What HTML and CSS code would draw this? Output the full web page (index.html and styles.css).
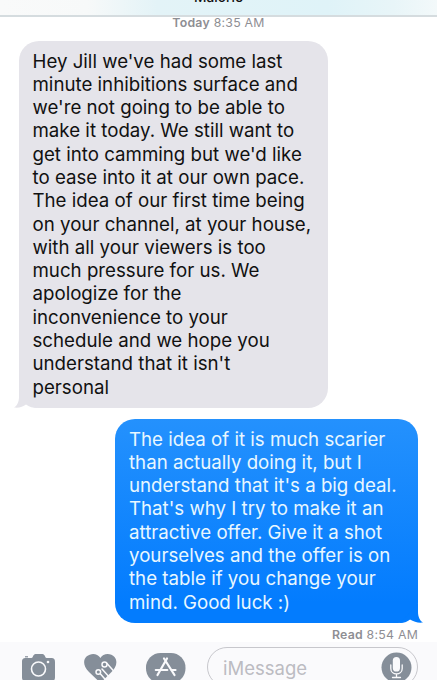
FILE: index.html
```html
<!DOCTYPE html>
<html lang="en">
<head>
  <meta charset="UTF-8" />
  <meta name="viewport" content="width=device-width, initial-scale=1.0"/>
  <title>Messages</title>
  <link rel="stylesheet" href="styles.css">
</head>
<body>
  <div class="phone">
    <!-- Contact header -->
    <header class="header"><span class="contact">Malorie</span></header>

    <!-- Conversation -->
    <main class="chat">
      <div class="timestamp"><b>Today</b> 8:35 AM</div>

      <div class="bubble received">
        Hey Jill we've had some last<br>
        minute inhibitions surface and<br>
        we're not going to be able to<br>
        make it today. We still want to<br>
        get into camming but we'd like<br>
        to ease into it at our own pace.<br>
        The idea of our first time being<br>
        on your channel, at your house,<br>
        with all your viewers is too<br>
        much pressure for us. We<br>
        apologize for the<br>
        inconvenience to your<br>
        schedule and we hope you<br>
        understand that it isn't<br>
        personal
        <svg class="tail" width="24" height="20" viewBox="0 0 24 20"><path d="M5 0V9C5 14 3 18 0 19.500C5 20 9 19 12 16.500C15 19 19 20 24 20L16 13Z" fill="#e5e4ea"/></svg>
      </div>

      <div class="bubble sent">
        The idea of it is much scarier<br>
        than actually doing it, but I<br>
        understand that it's a big deal.<br>
        That's why I try to make it an<br>
        attractive offer. Give it a shot<br>
        yourselves and the offer is on<br>
        the table if you change your<br>
        mind. Good luck :)
        <svg class="tail" width="24" height="20" viewBox="0 0 24 20"><path d="M19 0V9C19 14 21 18 24 19.500C19 20 15 19 11 16.500C8 19 5 20 0 20L8 13Z" fill="#037cfe"/></svg>
      </div>

      <div class="receipt"><b>Read</b> 8:54 AM</div>
    </main>

    <!-- Message bar -->
    <footer class="toolbar">
      <svg class="camera" width="34" height="28" viewBox="0 0 34 28">
        <path d="M3 2.200h3v1.200H3z" fill="#858e99"/>
        <path d="M4 4h5.500c1.500 0 1.500-4 4-4h7c2.500 0 2.500 4 4 4H29c3 0 4 1 4 4v15c0 3-1 4-4 4H4c-3 0-4-1-4-4V8c0-3 1-4 4-4z" fill="#858e99"/>
        <circle cx="16.500" cy="15" r="7" fill="none" stroke="#fafafc" stroke-width="1.600"/>
        <circle cx="26" cy="8" r="1.300" fill="#fafafc"/>
      </svg>
      <svg class="heart" width="34" height="30" viewBox="0 0 34 30">
        <path d="M16.500 4C19-1 27-1 30.500 3c4 5 1 11-3 15L16.500 29 5 18C-1 12-1 6 2.500 2.500 7-1 13-1 16.500 4z" fill="#858e99"/>
        <g fill="none" stroke="#fafafc" stroke-width="1.500" stroke-linecap="round">
          <circle cx="14.300" cy="18" r="2.300"/>
          <circle cx="20.500" cy="10.500" r="2.500"/>
          <path d="M18 15l9 10M23 9.500l8 9M16.500 20l7 8"/>
        </g>
      </svg>
      <svg class="apps" width="40" height="30" viewBox="0 0 40 30">
        <rect width="39.500" height="30" rx="14.500" fill="#858e99"/>
        <g fill="none" stroke="#fafafc" stroke-width="2.200" stroke-linecap="round">
          <path d="M21 5.500L11.500 22M18 5.500L28.500 22"/>
          <path d="M9.800 17h11.500M25.500 17h4"/>
        </g>
      </svg>
      <div class="field">
        <span class="placeholder">iMessage</span>
        <svg class="mic" width="31" height="31" viewBox="0 0 31 31">
          <circle cx="15.500" cy="15.500" r="15" fill="#858e99"/>
          <rect x="11.800" y="5" width="7.200" height="14.500" rx="3.600" fill="#fafafc"/>
          <path d="M9.800 13v3.500c0 7.200 11.400 7.200 11.400 0V13M15.500 22v3.500M11.500 25.500h8" fill="none" stroke="#fafafc" stroke-width="1.300" stroke-linecap="round"/>
        </svg>
      </div>
    </footer>
  </div>
</body>
</html>
```
FILE: styles.css
```css
* {
  box-sizing: border-box;
}
body {
  margin: 0;
  background: #fff;
  font-family: Inter, "Liberation Sans", sans-serif;
  overflow: hidden;
}
.phone {
  width: 437px;
  height: 680px;
  display: flex;
  flex-direction: column;
  overflow: hidden;
}
.header {
  flex: none;
  height: 17px;
  display: flex;
  justify-content: center;
  align-items: flex-end;
  padding-bottom: 9px;
  border-bottom: 2px solid #d5dcdf;
  background: linear-gradient(90deg, #f9fafa 0, #f7f9f9 20%, #e3f3f7 36%, #dff3f8 75%, #e8f5f8 90%, #f3f9fa 100%);
}
.contact {
  font-size: 13.7px;
  line-height: 17px;
  font-weight: 500;
  color: #111;
}
.chat {
  flex: none;
  height: 625px;
  display: flex;
  flex-direction: column;
}
.timestamp,
.receipt {
  font-size: 12.3px;
  line-height: 14px;
  letter-spacing: 0.25px;
  color: #8e8e93;
}
.timestamp b,
.receipt b {
  font-weight: 600;
}
.timestamp {
  text-align: center;
  margin-top: -1px;
}
.bubble {
  position: relative;
  border-radius: 20px;
  font-size: 18.7px;
  line-height: 23.3px;
  white-space: nowrap;
}
.received {
  width: 309px;
  height: 367px;
  margin: 11px 0 0 19px;
  padding: 8.500px 13.500px;
  background: #e5e4ea;
  color: #111;
}
.sent {
  width: 303px;
  height: 204px;
  margin: 11px 19px 0 0;
  align-self: flex-end;
  padding: 8.500px 14px;
  background: linear-gradient(#2491fd, #037cfe 90%);
  color: #e8f7ff;
}
.tail {
  position: absolute;
  bottom: 0;
}
.received .tail {
  left: -5px;
}
.sent .tail {
  right: -5px;
}
.receipt {
  text-align: right;
  margin: 5px 19px 0 0;
}
.toolbar {
  flex: none;
  height: 38px;
  display: flex;
  align-items: flex-start;
  padding-left: 22px;
  background: #fafafc;
}
.camera {
  flex: none;
  margin-top: 12px;
}
.heart {
  flex: none;
  margin: 12px 0 0 28px;
}
.apps {
  flex: none;
  margin: 11px 0 0 28px;
}
.field {
  flex: none;
  width: 211px;
  height: 40px;
  margin: 5px 0 0 21px;
  padding: 0 5px 0 15px;
  display: flex;
  align-items: center;
  justify-content: space-between;
  border: 1px solid #c7c7cc;
  border-radius: 20px;
}
.placeholder {
  font-size: 18.5px;
  line-height: 24px;
  padding-top: 2px;
  color: #bcbcc2;
}
```
